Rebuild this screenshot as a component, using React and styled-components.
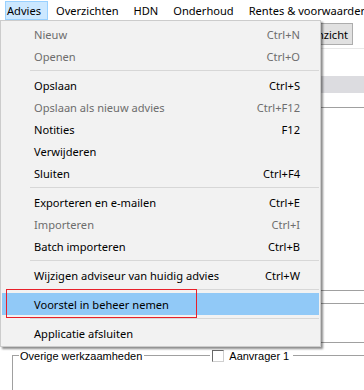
import React from 'react';
import styled, { createGlobalStyle } from 'styled-components';

const Global = createGlobalStyle`
  html, body { margin: 0; padding: 0; background: #ffffff; }
  body { width: 364px; height: 390px; overflow: hidden; }
  * { box-sizing: border-box; }
`;

const Window = styled.div`
  position: relative;
  width: 364px;
  height: 390px;
  overflow: hidden;
  background: #ffffff;
  font-family: "Noto Sans", sans-serif;
  font-size: 11.1px;
  color: #000;
`;

const MenuBar = styled.div`
  display: flex;
  height: 20px;
  padding: 1px 0 0 5px;
  gap: 6px;
  background: #ffffff;
`;

const BarItem = styled.div`
  display: flex;
  align-items: center;
  height: 19px;
  padding: 0 6px 0 1px;
  white-space: nowrap;
  border: 1px solid ${p => (p.$open ? '#99d1ff' : 'transparent')};
  background: ${p => (p.$open ? '#cce8ff' : 'transparent')};
`;

const Content = styled.div`
  display: flex;
  flex-direction: column;
`;

const Toolbar = styled.div`
  display: flex;
  justify-content: flex-end;
  align-items: flex-start;
  height: 29px;
  padding: 3px 11px 0 0;
  border-bottom: 1px solid #e8e8e8;
`;

const ToolButton = styled.button`
  height: 22px;
  padding: 0 4px 0 6px;
  border: 1px solid #adadad;
  background: #e1e1e1;
  font-family: "Noto Sans", sans-serif;
  font-size: 11.1px;
  color: #000;
`;

const Band = styled.div`
  height: 17px;
  margin-top: 27px;
  background: #dcdce0;
`;

const Rule = styled.div`
  height: 1px;
  margin-top: ${p => p.$gap}px;
  background: #a0a0a0;
`;

const Group = styled.section`
  margin: 6px 0 0 12px;
  font-family: "Liberation Sans", Arial, sans-serif;
  font-size: 11px;
`;

const GroupHead = styled.div`
  display: flex;
  align-items: center;
  height: 13px;
`;

const HeadLine = styled.span`
  height: 1px;
  background: #a0a0a0;
  flex: ${p => (p.$grow ? '1 1 auto' : `0 0 ${p.$w}px`)};
`;

const HeadText = styled.span`
  padding: 0 ${p => p.$right}px 0 ${p => p.$left}px;
  white-space: nowrap;
`;

const Check = styled.span`
  width: 12px;
  height: 12px;
  margin-left: 2px;
  margin-right: 4px;
  background: #ffffff;
  border-top: 1px solid #6a6a6a;
  border-left: 1px solid #6a6a6a;
  border-right: 1px solid #cfcfcf;
  border-bottom: 1px solid #cfcfcf;
`;

const GroupBody = styled.div`
  height: 40px;
  margin-top: -7px;
  border-left: 1px solid #a0a0a0;
`;

const Dropdown = styled.div`
  position: absolute;
  left: 0;
  top: 20px;
  width: 321px;
  padding: 2px 1px;
  background: #f2f2f2;
  border: 1px solid #cccccc;
  box-shadow: 2px 2px 2px rgba(0, 0, 0, 0.45);
  display: flex;
  flex-direction: column;
`;

const Item = styled.div`
  position: relative;
  display: flex;
  align-items: center;
  justify-content: space-between;
  height: 22px;
  padding: 0 19px 0 32px;
  white-space: nowrap;
  color: ${p => (p.$disabled ? '#6d6d6d' : '#000000')};
  background: ${p => (p.$hot ? '#91c9f7' : 'transparent')};
`;

const Shortcut = styled.span``;

const Separator = styled.div`
  height: 7px;
  padding-top: 3px;
  margin-left: 28px;
  &::before {
    content: '';
    display: block;
    height: 1px;
    background: #d7d7d7;
  }
`;

const Marker = styled.span`
  position: absolute;
  left: 4px;
  top: -4px;
  width: 191px;
  height: 29px;
  border: 1px solid #e8202a;
  pointer-events: none;
`;

const menu = [
  { label: 'Nieuw', key: 'Ctrl+N', disabled: true },
  { label: 'Openen', key: 'Ctrl+O', disabled: true },
  'sep',
  { label: 'Opslaan', key: 'Ctrl+S' },
  { label: 'Opslaan als nieuw advies', key: 'Ctrl+F12', disabled: true },
  { label: 'Notities', key: 'F12' },
  { label: 'Verwijderen', key: '' },
  { label: 'Sluiten', key: 'Ctrl+F4' },
  'sep',
  { label: 'Exporteren en e-mailen', key: 'Ctrl+E' },
  { label: 'Importeren', key: 'Ctrl+I', disabled: true },
  { label: 'Batch importeren', key: 'Ctrl+B' },
  'sep',
  { label: 'Wijzigen adviseur van huidig advies', key: 'Ctrl+W' },
  'sep',
  { label: 'Voorstel in beheer nemen', key: '', hot: true },
  'sep',
  { label: 'Applicatie afsluiten', key: '' },
];

export default function App() {
  return (
    <Window>
      <Global />
      <MenuBar>
        <BarItem $open>Advies</BarItem>
        <BarItem>Overzichten</BarItem>
        <BarItem>HDN</BarItem>
        <BarItem>Onderhoud</BarItem>
        <BarItem>Rentes &amp; voorwaarden</BarItem>
      </MenuBar>
      <Content>
        <Toolbar>
          <ToolButton>Klantinzicht</ToolButton>
        </Toolbar>
        <Band />
        <Rule $gap={14} />
        <Rule $gap={182} />
        <Rule $gap={12} />
        <Rule $gap={38} />
        <Group>
          <GroupHead>
            <HeadLine $w={7} />
            <HeadText $left={1} $right={2}>Overige werkzaamheden</HeadText>
            <HeadLine $w={66} />
            <Check />
            <HeadText $left={1} $right={4}>Aanvrager 1</HeadText>
            <HeadLine $grow />
          </GroupHead>
          <GroupBody />
        </Group>
      </Content>
      <Dropdown>
        {menu.map((m, i) =>
          m === 'sep' ? (
            <Separator key={i} />
          ) : (
            <Item key={i} $disabled={m.disabled} $hot={m.hot}>
              <span>{m.label}</span>
              <Shortcut>{m.key}</Shortcut>
              {m.hot && <Marker />}
            </Item>
          )
        )}
      </Dropdown>
    </Window>
  );
}
